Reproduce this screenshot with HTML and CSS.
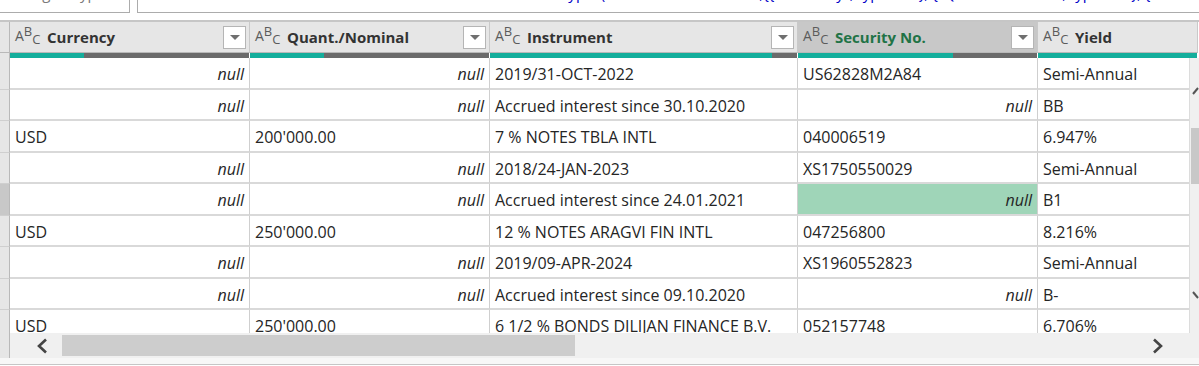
FILE: index.html
```html
<!DOCTYPE html>
<html lang="en">
<head>
    <meta charset="UTF-8">
    <title>Query preview</title>
    <link rel="stylesheet" href="styles.css">
</head>
<body>
    <!-- formula bar (cut off at the top) -->
    <div class="formula-bar">
        <div class="name-box"><span class="fx-text">Changed Type</span></div>
        <div class="formula-box">
            <span class="fx-text">= Table.TransformColumnTypes(#"Promoted Headers",{{"Currency", type text}, {"Quant./Nominal", type text}, {"Instrument", type text}, {"Security No.", type text}, {"Yield", type text}})</span>
        </div>
    </div>

    <div class="grid-wrap">
        <div class="grid" id="grid"></div>
        <div class="vscroll">
            <svg class="v-up" width="8" height="10" viewBox="0 0 8 10"><path d="M1 8 L6 2" stroke="#555" stroke-width="2" fill="none"/></svg>
            <div class="v-thumb"></div>
            <svg class="v-down" width="8" height="10" viewBox="0 0 8 10"><path d="M1 2 L6 8" stroke="#555" stroke-width="2" fill="none"/></svg>
        </div>
    </div>

    <!-- horizontal scrollbar -->
    <div class="hscroll-row">
        <div class="row-num-tail"></div>
        <div class="hscroll">
            <svg class="h-arrow" width="12" height="16" viewBox="0 0 12 16"><path d="M10 1.5 L3 8 L10 14.5" stroke="#444" stroke-width="2.6" fill="none"/></svg>
            <div class="h-thumb"></div>
            <svg class="h-arrow h-right" width="12" height="16" viewBox="0 0 12 16"><path d="M2 1.5 L9 8 L2 14.5" stroke="#444" stroke-width="2.6" fill="none"/></svg>
        </div>
    </div>
    <div class="status-line"></div>

    <script>
        // column headers: name, teal share of the quality bar
        const columns = [
            { name: 'Currency', valid: 31 },
            { name: 'Quant./Nominal', valid: 31 },
            { name: 'Instrument', valid: 92 },
            { name: 'Security No.', valid: 65, selected: true },
            { name: 'Yield', valid: 100, noButton: true }
        ];

        const N = null;
        const rows = [
            [N, N, '2019/31-OCT-2022', 'US62828M2A84', 'Semi-Annual'],
            [N, N, 'Accrued interest since 30.10.2020', N, 'BB'],
            ['USD', "200'000.00", '7 % NOTES TBLA INTL', '040006519', '6.947%'],
            [N, N, '2018/24-JAN-2023', 'XS1750550029', 'Semi-Annual'],
            [N, N, 'Accrued interest since 24.01.2021', N, 'B1'],
            ['USD', "250'000.00", '12 % NOTES ARAGVI FIN INTL', '047256800', '8.216%'],
            [N, N, '2019/09-APR-2024', 'XS1960552823', 'Semi-Annual'],
            [N, N, 'Accrued interest since 09.10.2020', N, 'B-'],
            ['USD', "250'000.00", '6 1/2 % BONDS DILIJAN FINANCE B.V.', '052157748', '6.706%']
        ];

        const grid = document.getElementById('grid');
        let html = '<div class="row-num head"></div>';

        columns.forEach(col => {
            html += `
                <div class="head-cell${col.selected ? ' selected' : ''}">
                    <span class="type-icon">A<sup>B</sup><sub>C</sub></span>
                    <span class="head-name">${col.name}</span>
                    ${col.noButton ? '' : '<span class="drop-btn"></span>'}
                </div>`;
        });

        html += '<div class="row-num bar-gap"></div>';
        columns.forEach(col => {
            html += `<div class="quality"><div class="valid" style="width:${col.valid}%"></div></div>`;
        });

        rows.forEach((row, r) => {
            html += `<div class="row-num${r === 4 ? ' active' : ''}"></div>`;
            row.forEach((val, c) => {
                const hit = r === 4 && c === 3 ? ' hit' : '';
                if (val === null) {
                    html += `<div class="cell null${hit}">null</div>`;
                } else {
                    html += `<div class="cell${hit}">${val}</div>`;
                }
            });
        });

        grid.innerHTML = html;
    </script>
</body>
</html>
```

FILE: styles.css
```css
body {
    margin: 0;
    background: #ffffff;
    font-family: 'Open Sans', 'Noto Sans', sans-serif;
    color: #252525;
    width: 1199px;
    height: 366px;
    overflow: hidden;
}

/* formula bar */
.formula-bar {
    display: flex;
    height: 13px;
    gap: 7px;
    border-bottom: 7px solid #ffffff;
}

.name-box {
    width: 129px;
    border-right: 1px solid #acacac;
    border-bottom: 1px solid #acacac;
    overflow: hidden;
    position: relative;
}

.formula-box {
    flex: 1;
    border-left: 1px solid #acacac;
    border-bottom: 1px solid #acacac;
    overflow: hidden;
    position: relative;
}

.fx-text {
    position: absolute;
    left: 6px;
    top: -17px;
    font-size: 15px;
    white-space: nowrap;
    color: #7a7a7a;
}

.formula-box .fx-text {
    color: #0000c8;
    left: 240px;
}

/* grid */
.grid-wrap {
    display: flex;
    height: 311px;
    border-top: 2px solid #c6c6c6;
    overflow: hidden;
    position: relative;
}

.grid {
    display: grid;
    grid-template-columns: 10px 240px 240px 308px 240px 160px;
    grid-template-rows: 31px 5px repeat(9, 31.5px);
    flex: none;
    width: 1199px;
}

.row-num {
    background: #e6e6e6;
    border-right: 1px solid #b9b9b9;
    border-bottom: 1px solid #cfcfcf;
    box-sizing: border-box;
}

.row-num.head {
    border-bottom: 1px solid #b9b9b9;
}

.row-num.bar-gap {
    border-bottom: none;
}

.row-num.active {
    background: #c8c8c8;
}

.head-cell {
    display: flex;
    align-items: center;
    background: #e6e6e6;
    border-right: 1px solid #c9c9c9;
    border-bottom: 1px solid #b9b9b9;
    box-sizing: border-box;
    padding: 0 3px 0 5px;
}

.head-cell.selected {
    background: #c8c8c8;
}

.head-cell.selected .head-name {
    color: #217346;
}

.type-icon {
    font-size: 14px;
    color: #5b5b5b;
    width: 32px;
    flex: none;
    line-height: 1;
    position: relative;
    top: -1px;
}

.type-icon sup,
.type-icon sub {
    font-size: 13px;
    vertical-align: baseline;
    position: relative;
}

.type-icon sup {
    top: -5px;
}

.type-icon sub {
    top: 3px;
}

.head-name {
    flex: 1;
    font-size: 15px;
    font-weight: bold;
    color: #333333;
    white-space: nowrap;
}

.drop-btn {
    width: 21px;
    height: 21px;
    background: #ffffff;
    border: 1px solid #b5b5b5;
    flex: none;
    display: flex;
    align-items: center;
    justify-content: center;
}

.drop-btn::after {
    content: '';
    border-left: 5px solid transparent;
    border-right: 5px solid transparent;
    border-top: 5px solid #6f6f6f;
}

/* column quality bar */
.quality {
    background: #6b6b6b;
    border-right: 1px solid #ffffff;
}

.valid {
    height: 100%;
    background: #14ae9c;
}

/* data cells */
.cell {
    font-size: 16px;
    line-height: 30px;
    padding: 1px 5px 0;
    border-right: 1px solid #cfcfcf;
    border-bottom: 2px solid #d9d9d9;
    white-space: nowrap;
    overflow: hidden;
    box-sizing: border-box;
}

.cell.null {
    font-style: italic;
    text-align: right;
}

.cell.hit {
    background: #9fd5b8;
}

/* vertical scrollbar */
.vscroll {
    position: absolute;
    right: 0;
    top: 36px;
    bottom: 0;
    width: 9px;
    background: #f0f0f0;
    border-left: 1px solid #dcdcdc;
}

.v-up,
.v-down {
    position: absolute;
    left: 2px;
}

.v-up {
    top: 28px;
}

.v-down {
    top: 232px;
}

.v-thumb {
    position: absolute;
    left: 1px;
    right: 0;
    top: 70px;
    height: 56px;
    background: #c8c8c8;
}

/* horizontal scrollbar */
.hscroll-row {
    display: flex;
    height: 25px;
}

.row-num-tail {
    width: 9px;
    background: #e6e6e6;
    border-right: 1px solid #b9b9b9;
}

.hscroll {
    flex: 1;
    display: flex;
    align-items: center;
    background: #f0f0f0;
    padding: 0 35px 0 26px;
    gap: 14px;
}

.h-arrow {
    flex: none;
}

.h-right {
    margin-left: auto;
}

.h-thumb {
    width: 513px;
    height: 21px;
    background: #cdcdcd;
}

.status-line {
    height: 6px;
    border-bottom: 1px solid #c6c6c6;
    background: #f7f7f7;
}
```
